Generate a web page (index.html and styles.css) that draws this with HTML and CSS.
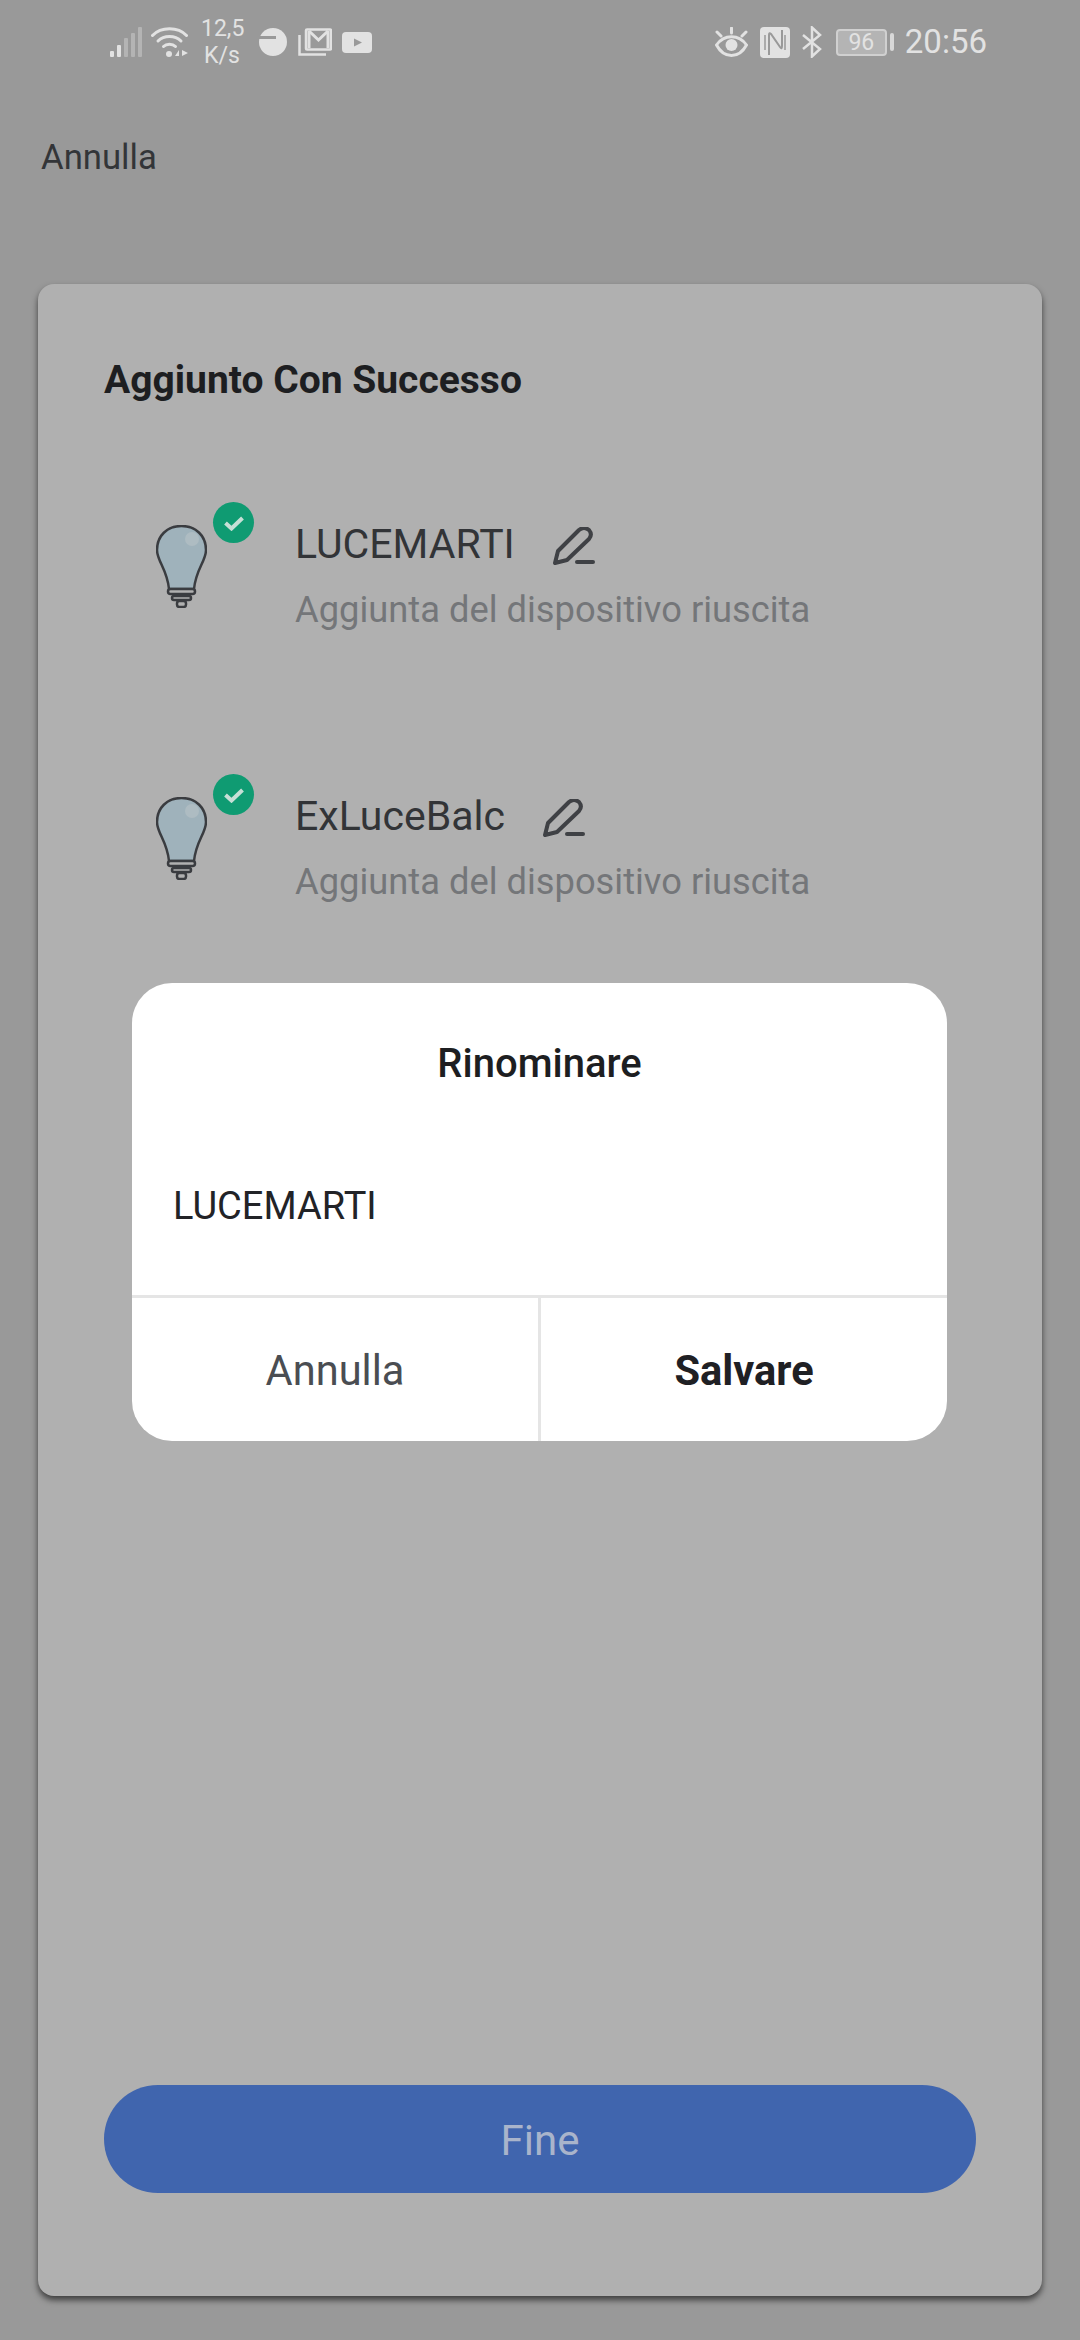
FILE: index.html
```html
<!DOCTYPE html>
<html lang="it">
<head>
    <meta charset="UTF-8">
    <meta name="viewport" content="width=device-width, initial-scale=1.0">
    <title>Aggiunto Con Successo</title>
    <link rel="stylesheet" href="styles.css">
</head>
<body>
    <div class="page">
        <div class="status-bar">
            <div class="status-group">
                <svg class="ic-signal" width="32" height="30" viewBox="0 0 32 30">
                    <rect x="0" y="24" width="4" height="6" rx="1" fill="#e2e2e2"/>
                    <rect x="7" y="18" width="4" height="12" rx="1" fill="#e2e2e2"/>
                    <rect x="14" y="11" width="4" height="19" rx="1" fill="#b4b4b4"/>
                    <rect x="21" y="6" width="4" height="24" rx="1" fill="#b4b4b4"/>
                    <rect x="28" y="0" width="4" height="30" rx="1" fill="#b4b4b4"/>
                </svg>
                <svg class="ic-wifi" width="37" height="30" viewBox="0 0 37 30" fill="none" stroke="#e2e2e2" stroke-width="3" stroke-linecap="round">
                    <path d="M1.500 8.500C10 -0.500 27 -0.500 35.500 8.500"/>
                    <path d="M7 14C13 8 24 8 30 14"/>
                    <path d="M12.500 19.500C15.500 16.500 21.500 16.500 24.500 19.500"/>
                    <circle cx="18" cy="27" r="3" fill="#e2e2e2" stroke="none"/>
                    <path d="M24 29l4-6v6zM31 23l6 3-6 3z" fill="#e2e2e2" stroke="none"/>
                </svg>
                <div class="net-speed">12,5<br>K/s</div>
                <svg class="ic-dot" width="28" height="28" viewBox="0 0 28 28">
                    <circle cx="14" cy="14" r="14" fill="#e2e2e2"/>
                    <rect x="0" y="8" width="17" height="3" fill="#999"/>
                </svg>
                <svg class="ic-mail" width="34" height="28" viewBox="0 0 34 28" fill="none" stroke="#e2e2e2" stroke-width="2.500">
                    <rect x="8" y="1.500" width="25" height="20" rx="1"/>
                    <path d="M11 3v17M30 3v17" stroke-width="3"/>
                    <path d="M11 3l9.500 9L30 3" stroke-width="3"/>
                    <path d="M1.500 7v19.500H28"/>
                </svg>
                <svg class="ic-yt" width="30" height="21" viewBox="0 0 30 21">
                    <rect width="30" height="21" rx="4" fill="#e2e2e2"/>
                    <path d="M12 6.500l8 4-8 4z" fill="#999"/>
                </svg>
            </div>
            <div class="status-group status-right">
                <svg class="ic-eye" width="33" height="30" viewBox="0 0 33 30" fill="none" stroke="#e2e2e2" stroke-width="3" stroke-linecap="round">
                    <path d="M1.500 18C9 7 24 7 31.500 18C24 32 9 32 1.500 18Z"/>
                    <circle cx="16.500" cy="18" r="6" fill="#e2e2e2" stroke="none"/>
                    <path d="M16.500 1v5M2 5l4 4M31 5l-4 4"/>
                </svg>
                <svg class="ic-nfc" width="30" height="31" viewBox="0 0 30 31">
                    <rect width="30" height="31" rx="4" fill="#e2e2e2"/>
                    <path d="M9 28V8q0-3 2-1l9 13q2 3 2-1V3" fill="none" stroke="#999" stroke-width="2"/>
                    <path d="M5 8v15M25 8v15" fill="none" stroke="#999" stroke-width="1.500"/>
                </svg>
                <svg class="ic-bt" width="20" height="32" viewBox="0 0 20 32" fill="none" stroke="#e2e2e2" stroke-width="2.500">
                    <path d="M1 9l17 14-8 7.500V1.500l8 7.500L1 23"/>
                </svg>
                <div class="battery">
                    <div class="battery-body">96</div>
                    <div class="battery-nub"></div>
                </div>
                <div class="clock">20:56</div>
            </div>
        </div>

        <div class="top-bar">Annulla</div>

        <div class="card">
            <h1 class="card-title">Aggiunto Con Successo</h1>

            <div class="device">
                <div class="device-icon">
                    <svg class="bulb" width="51" height="83" viewBox="0 0 51 83">
                        <path d="M25.500 1C11 1 1 11 1 25C1 36 11 44 13 64H38C40 44 50 36 50 25C50 11 40 1 25.500 1Z" fill="#9fb2bb" stroke="#3a3c40" stroke-width="2.500"/>
                        <circle cx="36" cy="14" r="7" fill="#aebcc2"/>
                        <rect x="12" y="64" width="27" height="5" rx="2.500" fill="#b0b0b0" stroke="#3a3c40" stroke-width="2.500"/>
                        <rect x="16" y="71" width="19" height="4" rx="2" fill="none" stroke="#3a3c40" stroke-width="2.500"/>
                        <rect x="21" y="76" width="9" height="6" rx="2.500" fill="none" stroke="#3a3c40" stroke-width="2.500"/>
                    </svg>
                    <div class="badge">
                        <svg width="22" height="16" viewBox="0 0 22 16"><path d="M2.500 8l6 5.500L19.500 3" fill="none" stroke="#c6dfd6" stroke-width="4"/></svg>
                    </div>
                </div>
                <div class="device-info">
                    <div class="device-name">
                        LUCEMARTI
                        <svg class="pencil" width="42" height="38" viewBox="0 0 42 38" fill="none" stroke="#3f4145" stroke-width="4" stroke-linejoin="round" stroke-linecap="round">
                            <path d="M2 36L5 24L26 3C29 0.500 33 0.500 36 3C38.500 6 38.500 9 36 12L14 33Z"/>
                            <path d="M24 35H40"/>
                        </svg>
                    </div>
                    <div class="device-status">Aggiunta del dispositivo riuscita</div>
                </div>
            </div>

            <div class="device">
                <div class="device-icon">
                    <svg class="bulb" width="51" height="83" viewBox="0 0 51 83">
                        <path d="M25.500 1C11 1 1 11 1 25C1 36 11 44 13 64H38C40 44 50 36 50 25C50 11 40 1 25.500 1Z" fill="#9fb2bb" stroke="#3a3c40" stroke-width="2.500"/>
                        <circle cx="36" cy="14" r="7" fill="#aebcc2"/>
                        <rect x="12" y="64" width="27" height="5" rx="2.500" fill="#b0b0b0" stroke="#3a3c40" stroke-width="2.500"/>
                        <rect x="16" y="71" width="19" height="4" rx="2" fill="none" stroke="#3a3c40" stroke-width="2.500"/>
                        <rect x="21" y="76" width="9" height="6" rx="2.500" fill="none" stroke="#3a3c40" stroke-width="2.500"/>
                    </svg>
                    <div class="badge">
                        <svg width="22" height="16" viewBox="0 0 22 16"><path d="M2.500 8l6 5.500L19.500 3" fill="none" stroke="#c6dfd6" stroke-width="4"/></svg>
                    </div>
                </div>
                <div class="device-info">
                    <div class="device-name">
                        ExLuceBalc
                        <svg class="pencil" width="42" height="38" viewBox="0 0 42 38" fill="none" stroke="#3f4145" stroke-width="4" stroke-linejoin="round" stroke-linecap="round">
                            <path d="M2 36L5 24L26 3C29 0.500 33 0.500 36 3C38.500 6 38.500 9 36 12L14 33Z"/>
                            <path d="M24 35H40"/>
                        </svg>
                    </div>
                    <div class="device-status">Aggiunta del dispositivo riuscita</div>
                </div>
            </div>

            <button class="done-button">Fine</button>
        </div>

        <div class="dialog">
            <div class="dialog-title">Rinominare</div>
            <div class="dialog-input">LUCEMARTI</div>
            <div class="dialog-actions">
                <button class="dialog-btn">Annulla</button>
                <button class="dialog-btn dialog-btn-save">Salvare</button>
            </div>
        </div>
    </div>
</body>
</html>
```

FILE: styles.css
```css
* {
    box-sizing: border-box;
}
body {
    margin: 0;
    font-family: Roboto, "Liberation Sans", sans-serif;
    background-color: #999999;
}
.page {
    position: relative;
    display: flex;
    flex-direction: column;
    height: 2340px;
    padding-bottom: 44px;
    overflow: hidden;
}
.status-bar {
    display: flex;
    justify-content: space-between;
    align-items: center;
    height: 84px;
    padding: 0 93px 0 110px;
    color: #e2e2e2;
}
.status-group {
    display: flex;
    align-items: center;
}
.ic-signal {
    margin-right: 9px;
}
.net-speed {
    width: 42px;
    margin: 0 16px 0 13px;
    font-size: 23px;
    line-height: 27px;
    text-align: center;
}
.ic-mail {
    margin: 0 10px 0 11px;
}
.ic-eye {
    margin-right: 12px;
}
.ic-nfc {
    margin-right: 12px;
}
.ic-bt {
    margin-right: 14px;
}
.battery {
    display: flex;
    align-items: center;
    margin-right: 11px;
}
.battery-body {
    width: 51px;
    height: 27px;
    border: 2px solid #d0d0d0;
    border-radius: 4px;
    background-color: #b4b4b4;
    font-size: 23px;
    line-height: 23px;
    text-align: center;
}
.battery-nub {
    width: 4px;
    height: 18px;
    margin-left: 3px;
    border-radius: 2px;
    background-color: #d8d8d8;
}
.clock {
    font-size: 33px;
    line-height: 40px;
}
.top-bar {
    height: 200px;
    padding: 52px 0 0 41px;
    font-size: 34.700px;
    line-height: 42px;
    color: #333538;
}
.card {
    flex: 1;
    display: flex;
    flex-direction: column;
    margin: 0 38px;
    padding: 75px 66px 103px;
    border-radius: 16px;
    background-color: #b0b0b0;
    box-shadow: 0 4px 6px rgba(0, 0, 0, 0.6);
}
.card-title {
    margin: 0 0 101px;
    font-size: 39px;
    font-weight: 700;
    line-height: 42px;
    color: #1d1e21;
}
.device {
    display: flex;
    height: 272px;
    padding-left: 52px;
}
.device-icon {
    position: relative;
    width: 139px;
    padding-top: 23px;
}
.bulb {
    display: block;
}
.badge {
    position: absolute;
    top: 0;
    left: 57px;
    display: flex;
    justify-content: center;
    align-items: center;
    width: 41px;
    height: 41px;
    border-radius: 50%;
    background-color: #0f9b72;
}
.device-info {
    padding-top: 17px;
}
.device-name {
    display: flex;
    align-items: center;
    gap: 38px;
    height: 50px;
    font-size: 41px;
    color: #323437;
}
.pencil {
    margin-top: 4px;
}
.device-status {
    margin-top: 19px;
    font-size: 36.300px;
    line-height: 44px;
    color: #747679;
}
.done-button {
    height: 108px;
    margin-top: auto;
    padding-top: 3px;
    border: none;
    border-radius: 54px;
    background-color: #4065ae;
    font-family: inherit;
    font-size: 42px;
    color: #a9b4cb;
}
.dialog {
    position: absolute;
    top: 983px;
    left: 132px;
    display: flex;
    flex-direction: column;
    width: 815px;
    height: 458px;
    border-radius: 40px;
    background-color: #ffffff;
    overflow: hidden;
}
.dialog-title {
    padding-top: 59px;
    font-size: 40px;
    font-weight: 500;
    line-height: 44px;
    text-align: center;
    color: #1d1e21;
}
.dialog-input {
    margin-top: 98px;
    padding-left: 41px;
    font-size: 38px;
    line-height: 44px;
    color: #222327;
}
.dialog-actions {
    flex: 1;
    display: flex;
    margin-top: 67px;
    border-top: 3px solid #e5e5e5;
}
.dialog-btn {
    flex: 1;
    padding-top: 3px;
    border: none;
    background: none;
    font-family: inherit;
    font-size: 41.600px;
    color: #4a4d52;
}
.dialog-btn-save {
    border-left: 3px solid #e5e5e5;
    font-weight: 700;
    color: #1f2024;
}
```
